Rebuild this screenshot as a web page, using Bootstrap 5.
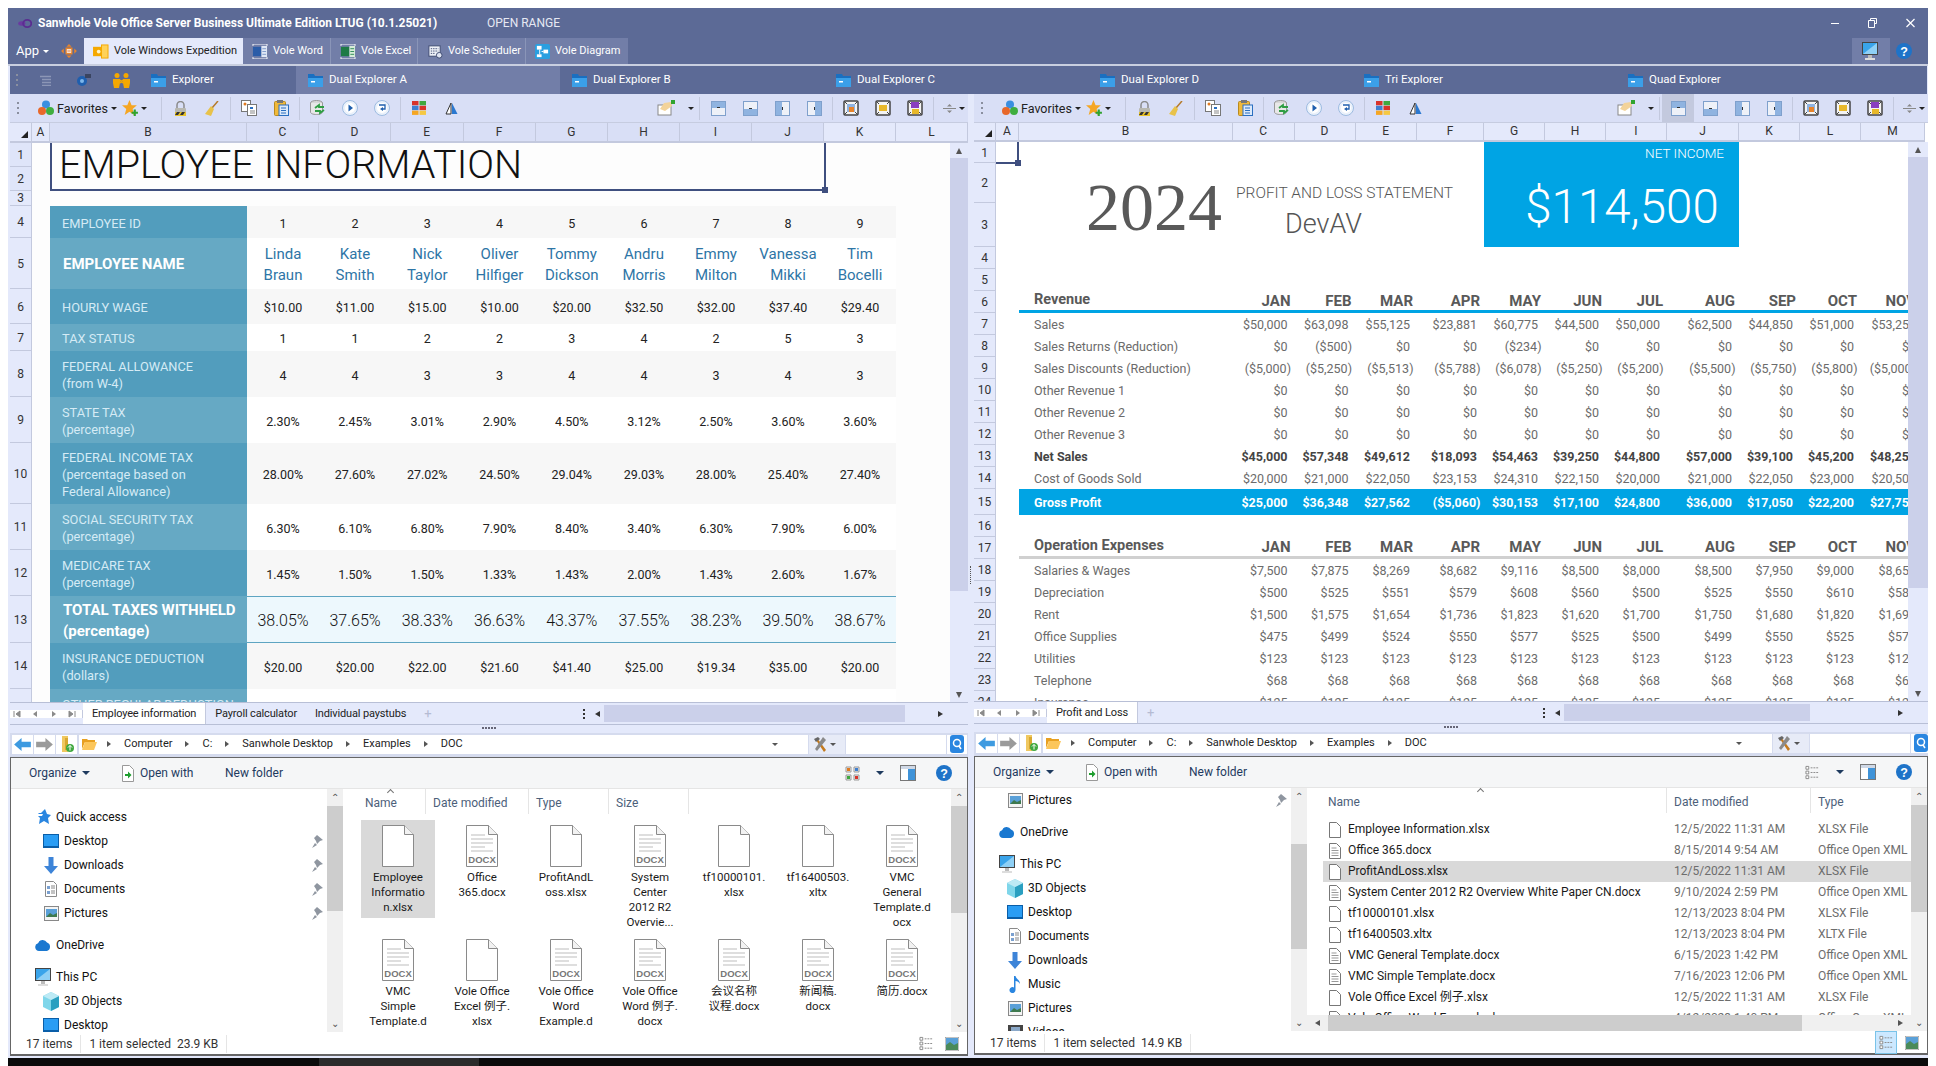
<!DOCTYPE html>
<html lang="en">
<head>
<meta charset="UTF-8">
<title>Sanwhole Vole Office Server</title>
<link href="https://cdn.jsdelivr.net/npm/bootstrap@5.3.0/dist/css/bootstrap.min.css" rel="stylesheet">
<style>
  html, body { height: 100%; overflow: hidden; background: #fff; }
  body { padding: 8px 8px 0; font: 12px/1.2 Roboto, "Noto Sans CJK SC", sans-serif; color: #222; }
  svg { display: block; flex: none; }
  #win { width: 1920px; height: 1050px; background: #e4e9fb; }
  .titlebar { height: 30px; background: #5c6a96; color: #fff; padding-left: 9px; }
  .titlebar b { font-size: 12px; font-weight: 700; margin-left: 6px; width: 422px; white-space: nowrap; }
  .titlebar .range { color: #e6e9f3; font-size: 12px; margin-left: 27px; }
  .win-btns { margin-left: auto; padding-right: 13px; gap: 29px; }
  .appbar { height: 26px; background: #5c6a96; color: #fff; }
  .appbar .app { width: 53px; padding-left: 8px; font-size: 13px; }
  .appbar .orange { width: 23px; }
  .apptab { height: 26px; background: #727ea8; color: #fff; padding-left: 9px; gap: 5px; border-right: 1px solid #8a95b8; white-space: nowrap; font-size: 11px; }
  .apptab.on { background: #e4e9fb; color: #222; border: 0; }
  .apptab.mon { width: 38px; padding-left: 10px; border: 0; margin-left: auto; }
  .help-top { width: 38px; padding-left: 6px; }
  .rule { height: 2px; background: #c9cfe0; }
  .exptabs { height: 28px; background: #5c6a96; color: #fff; margin: 0 1px 0 2px; font-size: 11.5px; }
  .exptabs .grip { width: 16px; padding-left: 6px; }
  .exptabs .tool { width: 38px; }
  .exptab { height: 28px; width: 264px; padding-left: 12px; gap: 6px; white-space: nowrap; }
  .exptab.first { width: 156px; padding-left: 11px; }
  .exptab.on { background: #727ea8; }
  .panes { height: 962px; padding-left: 2px; }
  .pane { flex: none; }
  .pane-l { width: 958px; }
  .pane-r { width: 954px; }
  .gutter { width: 6px; flex: none; }
  .gutter i { display: block; width: 1px; height: 18px; border-left: 1px dotted #555; margin-left: 2px; }
  .tbar { height: 29px; background: #d9dff6; border-bottom: 1px solid #c6cce0; padding-left: 7px; }
  .tbar .grip { width: 13px; }
  .grip i { display: block; width: 2px; height: 2px; background: #8a8f9f; margin: 3px 0; }
  .tb { width: 32px; height: 28px; display: flex; align-items: center; justify-content: center; flex: none; }
  .tb.act { background: #c3c9de; }
  .sep { width: 1px; height: 23px; background: #c3c9de; margin: 0 2px; flex: none; }
  .caret-d { width: 0; height: 0; border: 3px solid transparent; border-top: 3.5px solid #222; border-bottom: 0; flex: none; }
  .favs { margin-left: 8px; gap: 3px; width: 82px; font-size: 12.5px; }
  .star { width: 37px; gap: 2px; margin-left: 2px; }
  .hand { width: 49px; padding-left: 9px; gap: 13px; }
  .tb.div { width: 32px; gap: 3px; padding-left: 3px; }
  .sheet { position: relative; overflow: hidden; background: #fdfdfd; }
  .sheet-l { height: 579px; }
  .sheet-r { height: 578px; background: #fff; }
  table.grid { table-layout: fixed; border-collapse: separate; border-spacing: 0; }
  table.grid td, table.grid th { padding: 0; overflow: hidden; white-space: nowrap; }
  .ch { background: #e4e9fb; text-align: center; font-weight: 400; font-size: 12px; color: #333; border-right: 1px solid #c3c9de; border-bottom: 2px solid #c3c9de; }
  .ch.dk { background: #d9dff6; }
  .corner { position: relative; }
  .corner::after { content: ""; position: absolute; right: 3px; bottom: 3px; border-left: 7px solid transparent; border-bottom: 7px solid #222; }
  .rh { background: #e4e9fb; text-align: center; font-weight: 400; font-size: 12px; line-height: 1; color: #333; border-right: 1px solid #c3c9de; border-bottom: 1px solid #c3c9de; padding-top: 1px !important; }
  .rh.dk { background: #dfe5f9; }
  .title { font-size: 39.5px; line-height: 1; font-weight: 300; color: #111; padding-left: 9px !important; vertical-align: top; padding-top: 2px !important; }
  .lab { color: #d5ebf5; font-size: 12.8px; line-height: 17px; padding-left: 12px !important; padding-top: 2px !important; }
  .lab.big { color: #fff; font-weight: 700; font-size: 15px; line-height: 21px; padding-left: 13px !important; }
  .dark { background: #529dbd; }
  .lite { background: #66a9c4; }
  .num { text-align: center; font-size: 12.5px; color: #222; padding-top: 2px !important; }
  .zeb { background: #f7f7f7; }
  .wht { background: #fff; }
  .name { font-size: 15px; line-height: 21px; color: #2e75a6; }
  .tot { background: #edf8fd; font-size: 16px; font-weight: 300; color: #111; border-top: 1px solid #5ea5c2; border-bottom: 1px solid #5ea5c2; }
  .selbox { position: absolute; border: 2px solid #3f4f7f; border-top: 0; }
  .selbox b { position: absolute; width: 6px; height: 6px; background: #3f4f7f; right: -4px; bottom: -4px; }
  .year { font: 68px/1 "Liberation Serif", serif; color: #595959; text-align: right; padding-right: 11px !important; padding-top: 4px !important; }
  .pl { font-size: 15.5px; font-weight: 300; line-height: 20px; color: #555; padding-left: 3px !important; vertical-align: bottom; }
  .dev { font-size: 27px; font-weight: 300; color: #555; padding-left: 52px !important; }
  .netcell { background: #00a4e4; color: #fff; vertical-align: top; }
  .netcell .t1 { height: 22px; line-height: 22px; text-align: right; padding-right: 15px; font-size: 13.5px; font-weight: 300; }
  .netcell .t2 { margin-top: 13px; line-height: 60px; font-size: 47.5px; font-weight: 300; text-align: center; padding-left: 21px; }
  .pl-lab { padding-left: 15px !important; font-size: 12.5px; color: #6b6b6b; padding-top: 1px !important; }
  .pl-num { text-align: right; padding-right: 7px !important; font-size: 12.5px; color: #6b6b6b; padding-top: 1px !important; }
  .pl-num.neg { padding-right: 3.5px !important; }
  .hd { font-size: 15px; font-weight: 700; color: #595959; padding-right: 4px !important; padding-left: 0; }
  .hd-l { font-size: 14.5px; font-weight: 700; color: #595959; padding-left: 15px !important; }
  table.grid tr td.pl-num:last-child { padding-right: 9px !important; }
  .rev { border-bottom: 3px solid #00a4e4; }
  .ops { border-bottom: 3px solid #d0d0d0; }
  .bold { font-weight: 700; color: #444; }
  .gross { background: #00a4e4; color: #fff !important; font-weight: 700; }
  .vs { position: absolute; right: 0; bottom: 0; background: #e4e9fb; }
  .vs .thumb { background: #cbd0ea; }
  .vs .btn-up, .vs .btn-dn { height: 15px; }
  .tri-u { width: 0; height: 0; border: 3.5px solid transparent; border-bottom: 6px solid #555; border-top: 0; }
  .tri-d { width: 0; height: 0; border: 3.5px solid transparent; border-top: 6px solid #555; border-bottom: 0; }
  .tri-l { width: 0; height: 0; border: 3.5px solid transparent; border-right: 5px solid #333; border-left: 0; }
  .tri-r { width: 0; height: 0; border: 3.5px solid transparent; border-left: 5px solid #333; border-right: 0; }
  .tri-r.sm { border-width: 3px; border-left: 4px solid #555; border-right: 0; }
  .shtabs { height: 23px; background: #e4e9fb; border-top: 1px solid #b8bfd6; border-bottom: 1px solid #b8bfd6; white-space: nowrap; font-size: 11px; letter-spacing: -.15px; }
  .shnav { width: 73px; background: #fff; padding: 0 6px 0 3px; justify-content: space-between; border-right: 1px solid #c3c9de; flex: none; }
  .shtab { padding: 0 9px; }
  .shtab.on { background: #fff; border-right: 1px solid #c3c9de; }
  .shtab.plus { color: #b5bbd3; font-size: 13px; }
  .hs-thumb { height: 17px; background: #cbd0ea; }
  .dots3 { width: 2px; margin: 0 10px 0 auto; }
  .dots3 i { display: block; width: 2px; height: 2px; background: #333; margin: 2px 0; }
  .split { height: 8px; justify-content: center; padding-top: 2px; }
  .split i { display: block; width: 2px; height: 2px; background: #667; margin: 0 .5px; }
  .addr { height: 24px; background: #d5dbee; padding: 1px 2px 3px; gap: 1px; }
  .nav-b { width: 21px; height: 19px; background: #fff; display: flex; align-items: center; justify-content: center; flex: none; }
  .crumb { width: 707px; height: 19px; background: #fff; padding-left: 3px; flex: none; white-space: nowrap; margin-left: 1px; font-size: 11px; }
  .crumb .seg { margin: 0 13px; }
  .addr .gap { width: 22px; height: 19px; background: #fff; flex: none; margin-left: -1px; }
  .addr .toolb { width: 36px; height: 19px; background: #e7ebf7; flex: none; gap: 3px; padding-left: 5px; }
  .addr .sbox { width: 100px; height: 19px; background: #fff; flex: none; }
  .expl { height: 299px; border: 1px solid #666; border-bottom-width: 2px; background: #fff; margin-right: 0; }
  .ebar { height: 31px; background: #f5f6f7; border-bottom: 1px solid #e5e5e5; color: #1e3a5f; flex: none; }
  .ebar .org { margin-left: 18px; gap: 6px; width: 93px; }
  .ebar .open { width: 103px; gap: 6px; }
  .ebar .right { margin-left: auto; padding-right: 15px; }
  .emain { height: 243px; overflow: hidden; flex: none; }
  .enav { width: 316px; overflow: hidden; flex: none; }
  .nv { height: 24px; padding-left: 32px; gap: 5px; color: #111; white-space: nowrap; }
  .nv.top { padding-left: 24px; }
  .nv.gapb { margin-top: 8px; }
  .nv .ib { width: 16px; display: flex; justify-content: center; flex: none; }
  .nv .pin { margin-left: auto; margin-right: 3px; }
  .enav.sl { padding-top: 16px; }
  .vsb { width: 16px; background: #f0f0f0; flex: none; }
  .vsb .a { height: 17px; color: #555; font-size: 10px; line-height: 17px; text-align: center; }
  .vsb .th { background: #cdcdcd; }
  .efiles { flex: 1; min-width: 0; overflow: hidden; position: relative; }
  .colh { height: 25px; color: #4c607a; position: relative; }
  .colh > div { height: 25px; padding: 7px 0 0 7px; border-right: 1px solid #e5e5e5; flex: none; white-space: nowrap; }
  .sort { position: absolute; top: 1px; border: solid #777; border-width: 1px 0 0 1px; width: 5px; height: 5px; transform: rotate(45deg); }
  .fgrid { display: grid; grid-template-columns: repeat(7, 74px); column-gap: 10px; grid-auto-rows: 114px; margin: 6px 0 0 18px; }
  .fcell { height: fit-content; padding: 5px 0 3px; text-align: center; line-height: 15px; color: #1a1a1a; white-space: nowrap; font-size: 11.5px; }
  .fcell svg { margin: 0 auto 3px; }
  .fcell.on { background: #d9d9d9; }
  .flist { margin-top: 6px; }
  .fr { height: 21px; white-space: nowrap; }
  .fr.on { background: #d9d9d9; margin-right: 0; }
  .fr .n { width: 351px; padding-left: 6px; gap: 7px; color: #1a1a1a; flex: none; }
  .fr .d { width: 144px; color: #6d6d6d; flex: none; }
  .fr .y { color: #6d6d6d; }
  .hsb { position: absolute; left: 0; right: 0; bottom: 0; height: 16px; background: #f0f0f0; }
  .hsb .th { height: 16px; background: #cdcdcd; }
  .estat { height: 23px; border-top: 0; padding-left: 15px; color: #333; flex: none; white-space: nowrap; }
  .estat .s { border-right: 1px solid #e5e5e5; height: 18px; line-height: 18px; }
  .estat .v { margin-left: auto; gap: 8px; padding-right: 8px; }
  .vw { width: 22px; height: 23px; display: flex; align-items: center; justify-content: center; }
  .vw.on { background: #cce8ff; border: 1px solid #7ac3e8; }
  .taskbar { height: 8px; background: #0b0b0b; width: 1920px; }
  .taskbar .blk { width: 160px; height: 8px; background: #2b2b2b; margin-left: 311px; }
</style>
</head>
<body>
<svg width="0" height="0" style="position:absolute">
  <symbol id="logo" viewBox="0 0 16 10"><ellipse cx="5" cy="5" rx="4" ry="2.5" fill="#6a3aa0"/><ellipse cx="11" cy="5" rx="4.5" ry="4" fill="none" stroke="#5a2d91" stroke-width="2"/></symbol>
  <symbol id="fold" viewBox="0 0 15 15"><path d="M0 1h6l1 2h8v11H0z" fill="#1a6fc0"/><path d="M0 5h15v9H0z" fill="#3b9fe8"/><rect x="3" y="8" width="4" height="1.5" fill="#fff"/></symbol>
  <symbol id="orange" viewBox="0 0 18 16"><path d="M9 0l3 3H6zM9 16l-3-3h6zM0 8l3-3v6zM18 8l-3 3V5z" fill="#e8842a"/><rect x="5" y="4" width="8" height="8" fill="#e8842a"/><rect x="6.5" y="6" width="5" height="4" fill="#fff"/><rect x="7" y="7.5" width="4" height="1" fill="#d45a10"/></symbol>
  <symbol id="t-exp" viewBox="0 0 17 16"><rect x="0" y="3" width="11" height="10" fill="#f5a800"/><rect x="9" y="1" width="7" height="14" fill="#ffd25a" stroke="#f5a800"/><circle cx="6" cy="8" r="2" fill="#fff4c8"/></symbol>
  <symbol id="t-word" viewBox="0 0 17 16"><path d="M1 0h15M1 16h15M1 0v2M16 0v2M1 14v2M16 14v2" stroke="#fff"/><rect x="1" y="3" width="9" height="10" fill="#2b5ca8"/><rect x="10" y="2" width="6" height="12" fill="#dfe7f5"/><path d="M11 5h4M11 8h4M11 11h4" stroke="#7d98c8"/></symbol>
  <symbol id="t-xl" viewBox="0 0 17 16"><path d="M1 0h15M1 16h15M1 0v2M16 0v2M1 14v2M16 14v2" stroke="#fff"/><rect x="1" y="3" width="9" height="10" fill="#1e7a45"/><rect x="10" y="2" width="6" height="12" fill="#d6ecd8"/><path d="M11 5h4M11 8h4M11 11h4" stroke="#2e8b57"/></symbol>
  <symbol id="t-sch" viewBox="0 0 17 16"><rect x="2" y="2" width="12" height="11" fill="#eef1f8" stroke="#3d4a70"/><path d="M4 5h8M4 7.5h8M4 10h5" stroke="#3d4a70" stroke-dasharray="1.5 1"/><circle cx="13" cy="12" r="3" fill="#dfe4f2" stroke="#3d4a70"/></symbol>
  <symbol id="t-dia" viewBox="0 0 16 16"><rect width="16" height="16" rx="2" fill="#2a9fe0"/><rect x="2" y="2" width="5" height="4" fill="#fff"/><rect x="9" y="6" width="5" height="4" fill="#fff"/><rect x="2" y="11" width="5" height="3" fill="#fff"/><path d="M5 6v5M7 8h2" stroke="#fff"/></symbol>
  <symbol id="mon" viewBox="0 0 16 18"><rect x="0" y="0" width="16" height="13" fill="#444"/><rect x="1" y="1" width="14" height="11" fill="#3aa4ea"/><path d="M1 12L15 1v11z" fill="#8fd0f5"/><rect x="6" y="13" width="4" height="3" fill="#bbb"/><rect x="3" y="16" width="10" height="2" fill="#ddd"/></symbol>
  <symbol id="help" viewBox="0 0 16 16"><circle cx="8" cy="8" r="8" fill="#1e73c8"/><text x="8" y="12.5" font-size="12.5" font-weight="700" fill="#fff" text-anchor="middle" font-family="Liberation Sans">?</text></symbol>
  <symbol id="lst" viewBox="0 0 13 11"><path d="M1 1.5h11M3 4.5h9M3 7.5h9M3 10.5h9" stroke="#8c96b6" stroke-width="1.5"/></symbol>
  <symbol id="gear" viewBox="0 0 16 14"><circle cx="7" cy="8" r="5" fill="#1f5fae"/><circle cx="7" cy="8" r="2" fill="#7db6ea"/><rect x="10" y="1" width="6" height="4" fill="#3a4460"/></symbol>
  <symbol id="ppl" viewBox="0 0 17 15"><circle cx="4" cy="2.5" r="2.5" fill="#f5a800"/><circle cx="13" cy="2.5" r="2.5" fill="#f5a800"/><path d="M0 6h7v4l-1 5H1L0 10zM10 6h7v4l-1 5h-5l-1-5z" fill="#f5a800"/><path d="M7 7l3 3M10 7l-3 3" stroke="#f5a800" stroke-width="1.5"/></symbol>
  <symbol id="cube" viewBox="0 0 16 16"><circle cx="8" cy="4.5" r="4" fill="#3a8fe0"/><circle cx="4" cy="11" r="4" fill="#e8682a"/><circle cx="12" cy="11" r="4" fill="#3fae3f"/></symbol>
  <symbol id="star" viewBox="0 0 16 16"><path d="M7 0l2 5h5l-4 3.5 1.5 5.5L7 11l-4.500 3L4 8.500 0 5h5z" fill="#f5a623"/><path d="M12 9v6M9 12h6" stroke="#2fa32f" stroke-width="2"/></symbol>
  <symbol id="lock" viewBox="0 0 13 15"><path d="M3 7V4a3.500 3.500 0 0 1 7 0v3" fill="none" stroke="#8a8a8a" stroke-width="1.5"/><rect x="1" y="7" width="11" height="8" rx="1" fill="#b8b8b0"/><rect x="1" y="11" width="11" height="4" fill="#e8c22a"/><path d="M1 14l2-3h3l-2 3zM6 14l2-3h3l-2 3z" fill="#333"/></symbol>
  <symbol id="broom" viewBox="0 0 14 15"><path d="M13 0L7 7" stroke="#b57a2a" stroke-width="1.500"/><path d="M6 5l3 3-3 7-6-2z" fill="#e8c24a"/></symbol>
  <symbol id="copy" viewBox="0 0 16 16"><rect x="0.500" y="0.500" width="9" height="11" fill="#fff" stroke="#777"/><rect x="6.500" y="4.500" width="9" height="11" fill="#fff" stroke="#777"/><circle cx="4" cy="4" r="1.500" fill="#e07a20"/><rect x="9" y="7" width="3" height="2" fill="#2a6fc0"/><path d="M9 11h5M9 13h5" stroke="#888"/></symbol>
  <symbol id="paste" viewBox="0 0 15 16"><rect x="0.500" y="1.500" width="11" height="14" rx="1" fill="#f0b93a" stroke="#b98a1e"/><rect x="3" y="0" width="6" height="3" fill="#777"/><rect x="5" y="5" width="9.500" height="10.500" fill="#dbe9fa" stroke="#2a6fc0"/><path d="M7 8h5M7 10.500h5M7 13h5" stroke="#2a6fc0"/></symbol>
  <symbol id="reload" viewBox="0 0 16 16"><ellipse cx="6.500" cy="3" rx="6" ry="2.500" fill="#d8d8d8" stroke="#999"/><path d="M0.500 3v9c0 1.500 2.500 2.500 6 2.500s6-1 6-2.500V3" fill="#e8e8e8" stroke="#999"/><path d="M5 8l4-3v2h5M14 10l-4 3v-2H5" fill="none" stroke="#2f9e44" stroke-width="1.800"/></symbol>
  <symbol id="cplay" viewBox="0 0 16 16"><circle cx="8" cy="8" r="7.500" fill="#eaf1fb" stroke="#9dbbe0"/><circle cx="8" cy="8" r="5" fill="#fff"/><path d="M6.500 4.500L11 8l-4.500 3.500z" fill="#1f5fae"/></symbol>
  <symbol id="cret" viewBox="0 0 16 16"><circle cx="8" cy="8" r="7.500" fill="#eaf1fb" stroke="#9dbbe0"/><circle cx="8" cy="8" r="5" fill="#fff"/><path d="M5 5h6v4H8" fill="none" stroke="#1f5fae" stroke-width="1.300"/><path d="M9 7l-3 2 3 2z" fill="#1f5fae"/></symbol>
  <symbol id="wins" viewBox="0 0 14 14"><rect width="6.500" height="4.300" fill="#d9332a"/><rect x="7.500" width="6.500" height="4.300" fill="#3fa83f"/><rect y="4.800" width="6.500" height="4.300" fill="#3f7fd0"/><rect x="7.500" y="4.800" width="6.500" height="4.300" fill="#d9332a"/><rect y="9.600" width="6.500" height="4.300" fill="#f5a623"/><rect x="7.500" y="9.600" width="6.500" height="4.300" fill="#f5c842"/></symbol>
  <symbol id="tria" viewBox="0 0 13 13"><path d="M6 1v11H1z" fill="#fff" stroke="#333"/><path d="M7 1v11h5.500z" fill="#2a78d0"/></symbol>
  <symbol id="handc" viewBox="0 0 18 16"><rect x="1" y="5" width="13" height="10" fill="#fff" stroke="#888"/><path d="M3 9l4-6 7-1 1 4-7 5z" fill="#f3d39a"/><rect x="14" y="0" width="4" height="4" fill="#2fa32f"/></symbol>
  <symbol id="sp1" viewBox="0 0 15 15"><rect x="0.500" y="0.500" width="14" height="14" fill="#eef1f8" stroke="#7fa0cc"/><rect x="1" y="1" width="13" height="6" fill="#8fb3e0"/><rect x="6" y="6" width="3" height="1" fill="#333"/></symbol>
  <symbol id="sp2" viewBox="0 0 15 15"><rect x="0.500" y="0.500" width="14" height="14" fill="#eef1f8" stroke="#7fa0cc"/><rect x="1" y="8" width="13" height="6" fill="#8fb3e0"/><rect x="6" y="7" width="3" height="1" fill="#333"/></symbol>
  <symbol id="sp3" viewBox="0 0 15 15"><rect x="0.500" y="0.500" width="14" height="14" fill="#eef1f8" stroke="#7fa0cc"/><rect x="1" y="1" width="6" height="13" fill="#8fb3e0"/><rect x="7" y="6" width="1" height="3" fill="#333"/></symbol>
  <symbol id="sp4" viewBox="0 0 15 15"><rect x="0.500" y="0.500" width="14" height="14" fill="#eef1f8" stroke="#7fa0cc"/><rect x="8" y="1" width="6" height="13" fill="#8fb3e0"/><rect x="7" y="6" width="1" height="3" fill="#333"/></symbol>
  <symbol id="fr1" viewBox="0 0 16 16"><rect x="1" y="1" width="14" height="14" rx="1" fill="#f4f4f4" stroke="#444" stroke-width="1.500"/><path d="M1 1l3 3M15 1l-3 3M1 15l3-3M15 15l-3-3" stroke="#444"/><rect x="4" y="4" width="8" height="8" fill="#8fb3e0"/><rect x="6" y="7" width="5" height="5" fill="#e8842a"/></symbol>
  <symbol id="fr2" viewBox="0 0 16 16"><rect x="1" y="1" width="14" height="14" rx="1" fill="#f4f4f4" stroke="#444" stroke-width="1.500"/><path d="M1 1l3 3M15 1l-3 3M1 15l3-3M15 15l-3-3" stroke="#444"/><rect x="4" y="5" width="8" height="6" fill="#e8b82a"/></symbol>
  <symbol id="fr3" viewBox="0 0 16 16"><rect x="1" y="1" width="14" height="14" rx="1" fill="#f4f4f4" stroke="#444" stroke-width="1.500"/><path d="M1 1l3 3M15 1l-3 3M1 15l3-3M15 15l-3-3" stroke="#444"/><rect x="4" y="2" width="8" height="6" fill="#8a3fc0"/><rect x="5" y="9" width="7" height="5" fill="#e8b82a"/></symbol>
  <symbol id="dvd" viewBox="0 0 13 11"><path d="M0 5.500h13" stroke="#888"/><path d="M4 3.500h5L6.500 1zM4 7.500h5L6.500 10z" fill="#888"/></symbol>
  <symbol id="back" viewBox="0 0 18 14"><path d="M8 0v4h10v6H8v4L0 7z" fill="#3d9ae0"/></symbol>
  <symbol id="fwd" viewBox="0 0 18 14"><path d="M10 0v4H0v6h10v4l8-7z" fill="#9a9a9a"/></symbol>
  <symbol id="up" viewBox="0 0 14 18"><path d="M2 1h6v16H2z" fill="#f0c860"/><path d="M5 3h3v12H5z" fill="#d8a830"/><circle cx="10" cy="13" r="4" fill="#3fa83f"/><path d="M10 10.500v5M8 12.500l2-2 2 2" stroke="#fff" fill="none"/></symbol>
  <symbol id="ofold" viewBox="0 0 15 12"><path d="M0 1h5l1 1h7v2H3L0 11z" fill="#e8a020"/><path d="M3 4h12l-3 8H0z" fill="#fcc65a"/></symbol>
  <symbol id="hamm" viewBox="0 0 13 15"><path d="M3 1l9 12-2 2L2 3z" fill="#c47a1e"/><path d="M0 2l4-2 2 2-4 3z" fill="#666"/><path d="M9 0l3 3-9 11-2-2z" fill="#8a8a8a"/></symbol>
  <symbol id="srch" viewBox="0 0 14 18"><rect width="14" height="18" rx="3" fill="#2a86e0"/><circle cx="7" cy="8" r="3.500" fill="none" stroke="#fff" stroke-width="1.500"/><path d="M9 11l2 3" stroke="#fff" stroke-width="1.500"/></symbol>
  <symbol id="openw" viewBox="0 0 12 17"><path d="M0.500 0.500h7l4 4v12h-11z" fill="#fff" stroke="#999"/><path d="M3 9h3V6.500L9.500 10 6 13.500V11H3z" fill="#1e9e2e"/></symbol>
  <symbol id="viewl" viewBox="0 0 15 15"><path d="M1 1h5v5H1zM9 1h5v5H9zM1 9h5v5H1zM9 9h5v5H9z" fill="#eee" stroke="#999"/><path d="M2 2h3v3H2z" fill="#e07a20"/><path d="M10 2h3v3h-3z" fill="#3f7fd0"/><path d="M2 10h3v3H2z" fill="#3fa83f"/><path d="M10 10h3v3h-3z" fill="#d9332a"/></symbol>
  <symbol id="viewd" viewBox="0 0 16 15"><path d="M1 1h3v3H1zM1 6h3v3H1zM1 11h3v3H1z" fill="#fff" stroke="#888"/><path d="M6 2.500h9M6 7.500h9M6 12.500h9" stroke="#888" stroke-dasharray="2 1"/></symbol>
  <symbol id="pane" viewBox="0 0 16 16"><rect x="0.500" y="0.500" width="15" height="15" fill="#fff" stroke="#777"/><rect x="8" y="1" width="7" height="14" fill="#3f93d8"/><rect x="1" y="1" width="14" height="3" fill="#cfd8e6"/></symbol>
  <symbol id="stree" viewBox="0 0 14 14"><path d="M0 0h14v14H0z" fill="#fff" stroke="#888"/><path d="M1 1h12v7H1z" fill="#5aa0d8"/><path d="M1 8l4-3 4 3 4-2v7H1z" fill="#4a8a5a"/></symbol>
  <symbol id="qa" viewBox="0 0 15 16"><path d="M9 0l2 5 4 1-3 3 1 6-5-3-5 3 1-6-2-2h4l1-2H2l1-1h2z" fill="#2a86e0"/></symbol>
  <symbol id="desk" viewBox="0 0 16 14"><rect width="16" height="14" fill="#0a5ea8"/><rect x="1" y="1" width="14" height="11" fill="#2a9df4"/></symbol>
  <symbol id="down" viewBox="0 0 16 17"><path d="M5.500 0h5v9H15l-7 8-7-8h4.500z" fill="#3d84d8"/></symbol>
  <symbol id="docs" viewBox="0 0 12 16"><path d="M0.500 0.500h8l3 3v12h-11z" fill="#fff" stroke="#8a8a8a"/><path d="M2 5h3v3H2zM2 10h3v3H2z" fill="#7aa0d0"/><path d="M6 5h4M6 7h4M6 10h4M6 12h4" stroke="#888"/></symbol>
  <symbol id="pics" viewBox="0 0 15 15"><rect x="0.500" y="0.500" width="14" height="14" fill="#f4f4f4" stroke="#888"/><rect x="2" y="3" width="11" height="8" fill="#5aa0d8"/><path d="M2 11l4-4 3 2 4-2v4z" fill="#3f7a4f"/></symbol>
  <symbol id="odrv" viewBox="0 0 16 14"><path d="M4 13a4 4 0 0 1-1-7.800A5 5 0 0 1 12 4.500 4.500 4.500 0 0 1 12 13z" fill="#1a78d0"/><circle cx="6" cy="4" r="1.500" fill="#1a78d0"/></symbol>
  <symbol id="obj3" viewBox="0 0 16 19"><path d="M8 0l8 4v11l-8 4-8-4V4z" fill="#7fd6ea"/><path d="M8 8v11l8-4V4z" fill="#2a9fc0"/><path d="M0 4l8 4 8-4-8-4z" fill="#bdeaf5"/></symbol>
  <symbol id="music" viewBox="0 0 12 17"><path d="M5 0h1.500c.5 3 4.500 4 4.500 8-1-2-3-3-4.500-3v9a3 3 0 1 1-1.500-2.500z" fill="#2a86e0"/></symbol>
  <symbol id="vids" viewBox="0 0 15 15"><rect width="15" height="15" fill="#444"/><rect x="3" y="2" width="9" height="11" fill="#8aa8c8"/></symbol>
  <symbol id="pin" viewBox="0 0 12 14"><path d="M5 1l6 5-3 1-3 3-1-3-2-3z" fill="#8f96a0"/><path d="M3 9l-3 5 5-3" fill="#8f96a0"/></symbol>
  <symbol id="blank" viewBox="0 0 32 42"><path d="M0.500 0.500h22l9 9v32h-31z" fill="#fff" stroke="#8a8a8a"/><path d="M22.500 0.500v9h9" fill="#f2f2f2" stroke="#8a8a8a"/></symbol>
  <symbol id="docx" viewBox="0 0 32 42"><path d="M0.500 0.500h22l9 9v32h-31z" fill="#fff" stroke="#8a8a8a"/><path d="M22.500 0.500v9h9" fill="#f2f2f2" stroke="#8a8a8a"/><path d="M5 10h14M5 14h22M5 18h22M5 22h14M5 26h22" stroke="#bdbdbd"/><text x="16" y="38" font-size="9.500" font-weight="700" fill="#777" text-anchor="middle" font-family="Liberation Sans">DOCX</text></symbol>
  <symbol id="sblank" viewBox="0 0 12 16"><path d="M0.500 0.500h7l4 4v11h-11z" fill="#fff" stroke="#777"/></symbol>
  <symbol id="sdoc" viewBox="0 0 12 16"><path d="M0.500 0.500h7l4 4v11h-11z" fill="#fff" stroke="#777"/><path d="M2.500 5h5M2.500 7.500h7M2.500 10h7M2.500 12.500h7" stroke="#999"/></symbol>
  <symbol id="n-first" viewBox="0 0 8 8"><path d="M1 1v6M7 1v6L3 4zM4.500 2.500" stroke="#8a8a8a" fill="#8a8a8a"/></symbol>
  <symbol id="n-prev" viewBox="0 0 8 8"><path d="M6 1v6L2 4z" fill="#8a8a8a"/></symbol>
  <symbol id="n-next" viewBox="0 0 8 8"><path d="M2 1v6l4-3z" fill="#8a8a8a"/></symbol>
  <symbol id="n-last" viewBox="0 0 8 8"><path d="M7 1v6M1 1v6l4-3z" stroke="#8a8a8a" fill="#8a8a8a"/></symbol>
</svg>

<div id="win">
  <div class="titlebar d-flex align-items-center">
    <svg width="15" height="9"><use href="#logo"/></svg>
    <b>Sanwhole Vole Office Server Business Ultimate Edition LTUG (10.1.25021)</b>
    <span class="range">OPEN RANGE</span>
    <div class="win-btns d-flex align-items-center">
      <svg width="8" height="10"><path d="M0 5.500h8" stroke="#fff"/></svg>
      <svg width="9" height="10"><path d="M2.500 2.500V.5h6v5h-2M.5 2.500h6v7h-6z" fill="none" stroke="#fff"/></svg>
      <svg width="9" height="10"><path d="M.5 1l8 8M8.500 1l-8 8" stroke="#fff" stroke-width="1.200"/></svg>
    </div>
  </div>
  <div class="appbar d-flex align-items-center">
    <div class="app d-flex align-items-center gap-1">App <span class="caret-d" style="border-top-color:#fff"></span></div>
    <div class="orange"><svg width="16" height="14"><use href="#orange"/></svg></div>
    <div class="apptab on d-flex align-items-center" style="width:159px"><svg width="16" height="15"><use href="#t-exp"/></svg>Vole Windows Expedition</div>
    <div class="apptab d-flex align-items-center" style="width:88px"><svg width="16" height="15"><use href="#t-word"/></svg>Vole Word</div>
    <div class="apptab d-flex align-items-center" style="width:87px"><svg width="16" height="15"><use href="#t-xl"/></svg>Vole Excel</div>
    <div class="apptab d-flex align-items-center" style="width:108px"><svg width="16" height="15"><use href="#t-sch"/></svg>Vole Scheduler</div>
    <div class="apptab d-flex align-items-center" style="width:102px;border:0"><svg width="15" height="15"><use href="#t-dia"/></svg>Vole Diagram</div>
    <div class="apptab mon d-flex align-items-center"><svg width="16" height="18"><use href="#mon"/></svg></div>
    <div class="help-top"><svg width="16" height="16"><use href="#help"/></svg></div>
  </div>
  <div class="rule"></div>
  <div class="exptabs d-flex align-items-center">
    <div class="grip"><i></i><i></i><i></i></div>
    <div class="tool d-flex justify-content-center"><svg width="13" height="11"><use href="#lst"/></svg></div>
    <div class="tool d-flex justify-content-center"><svg width="16" height="14"><use href="#gear"/></svg></div>
    <div class="tool d-flex justify-content-center"><svg width="17" height="15"><use href="#ppl"/></svg></div>
    <div class="exptab first d-flex align-items-center"><svg width="15" height="15"><use href="#fold"/></svg>Explorer</div>
    <div class="exptab on d-flex align-items-center"><svg width="15" height="15"><use href="#fold"/></svg>Dual Explorer A</div>
    <div class="exptab d-flex align-items-center"><svg width="15" height="15"><use href="#fold"/></svg>Dual Explorer B</div>
    <div class="exptab d-flex align-items-center"><svg width="15" height="15"><use href="#fold"/></svg>Dual Explorer C</div>
    <div class="exptab d-flex align-items-center"><svg width="15" height="15"><use href="#fold"/></svg>Dual Explorer D</div>
    <div class="exptab d-flex align-items-center"><svg width="15" height="15"><use href="#fold"/></svg>Tri Explorer</div>
    <div class="exptab d-flex align-items-center"><svg width="15" height="15"><use href="#fold"/></svg>Quad Explorer</div>
  </div>
  <div class="panes d-flex">
    <div class="pane pane-l d-flex flex-column" id="paneL"></div>
    <div class="gutter d-flex align-items-center"><i></i></div>
    <div class="pane pane-r d-flex flex-column" id="paneR"></div>
  </div>
</div>
<div class="taskbar d-flex"><div class="blk"></div></div>

<script>
  const ic = (id, w, h) => `<svg width="${w}" height="${h}"><use href="#${id}"/></svg>`;
  const grip = `<div class="grip"><i></i><i></i><i></i></div>`;

  function toolbar(activeSplit) {
    return `<div class="tbar d-flex align-items-center flex-none">
      ${grip}
      <div class="favs d-flex align-items-center">${ic("cube",16,16)}<span>Favorites</span><span class="caret-d"></span></div>
      <div class="star d-flex align-items-center">${ic("star",17,17)}<span class="caret-d"></span></div>
      <div class="sep"></div>
      <div class="tb">${ic("lock",13,15)}</div><div class="tb">${ic("broom",14,15)}</div><div class="sep"></div>
      <div class="tb">${ic("copy",16,16)}</div><div class="tb">${ic("paste",15,16)}</div><div class="sep"></div>
      <div class="tb">${ic("reload",16,16)}</div><div class="tb">${ic("cplay",16,16)}</div><div class="tb">${ic("cret",16,16)}</div><div class="sep"></div>
      <div class="tb">${ic("wins",14,14)}</div><div class="tb">${ic("tria",13,13)}</div>
      <div class="ms-auto d-flex align-items-center">
        <div class="hand d-flex align-items-center">${ic("handc",18,16)}<span class="caret-d"></span></div>
        <div class="sep"></div>
        <div class="tb ${activeSplit ? "act" : ""}">${ic("sp1",15,15)}</div><div class="tb">${ic("sp2",15,15)}</div><div class="tb">${ic("sp3",15,15)}</div><div class="tb">${ic("sp4",15,15)}</div>
        <div class="sep"></div>
        <div class="tb">${ic("fr1",16,16)}</div><div class="tb">${ic("fr2",16,16)}</div><div class="tb">${ic("fr3",16,16)}</div>
        <div class="sep"></div>
        <div class="tb div">${ic("dvd",13,11)}<span class="caret-d"></span></div>
      </div></div>`;
  }

  const colgroup = w => `<colgroup>${w.map(x => `<col style="width:${x}px">`).join("")}</colgroup>`;
  const sum = a => a.reduce((x, y) => x + y, 0);

  function vscroll(w, thumb) {
    return `<div class="vs d-flex flex-column" style="width:${w}px;top:${w === 18 ? 20 : 19}px">
      <div class="btn-up d-flex justify-content-center align-items-center"><span class="tri-u"></span></div>
      <div class="thumb" style="height:${thumb}px"></div>
      <div class="flex-grow-1"></div>
      <div class="btn-dn d-flex justify-content-center align-items-center"><span class="tri-d"></span></div></div>`;
  }

  // left sheet: employee information
  const empRows = [
    ["dark","zeb","EMPLOYEE ID",[1,2,3,4,5,6,7,8,9]],
    ["lite big","wht","EMPLOYEE NAME",["Linda<br>Braun","Kate<br>Smith","Nick<br>Taylor","Oliver<br>Hilfiger","Tommy<br>Dickson","Andru<br>Morris","Emmy<br>Milton","Vanessa<br>Mikki","Tim<br>Bocelli"],"name"],
    ["dark","zeb","HOURLY WAGE",["$10.00","$11.00","$15.00","$10.00","$20.00","$32.50","$32.00","$37.40","$29.40"]],
    ["lite","wht","TAX STATUS",[1,1,2,2,3,4,2,5,3]],
    ["dark","zeb","FEDERAL ALLOWANCE<br>(from W-4)",[4,4,3,3,4,4,3,4,3]],
    ["lite","wht","STATE TAX<br>(percentage)",["2.30%","2.45%","3.01%","2.90%","4.50%","3.12%","2.50%","3.60%","3.60%"]],
    ["dark","zeb","FEDERAL INCOME TAX<br>(percentage based on<br>Federal Allowance)",["28.00%","27.60%","27.02%","24.50%","29.04%","29.03%","28.00%","25.40%","27.40%"]],
    ["lite","wht","SOCIAL SECURITY TAX<br>(percentage)",["6.30%","6.10%","6.80%","7.90%","8.40%","3.40%","6.30%","7.90%","6.00%"]],
    ["dark","zeb","MEDICARE TAX<br>(percentage)",["1.45%","1.50%","1.50%","1.33%","1.43%","2.00%","1.43%","2.60%","1.67%"]],
    ["lite big","tot","TOTAL TAXES WITHHELD<br>(percentage)",["38.05%","37.65%","38.33%","36.63%","43.37%","37.55%","38.23%","39.50%","38.67%"],"tot"],
    ["dark","zeb","INSURANCE DEDUCTION<br>(dollars)",["$20.00","$20.00","$22.00","$21.60","$41.40","$25.00","$19.34","$35.00","$20.00"]],
    ["lite","wht","OTHER REGULAR DEDUCTION<br>(dollars)",["","","","","","","","",""]]
  ];
  const lh = [32,51,35,27,46,46,61,46,46,47,46,46];
  const lw = [22,18,197,72,72,72.5,72,72.5,72,72,72,72,72];
  const letters = "ABCDEFGHIJKLM".split("");

  let L = `<table class="grid" style="width:${sum(lw)}px">${colgroup(lw)}<tr style="height:20px"><th class="ch corner"></th>`;
  letters.slice(0, 12).forEach((c, i) => { L += `<th class="ch ${i > 0 && i < 10 ? "dk" : ""}">${c}</th>`; });
  L += `</tr>
    <tr style="height:23.5px"><th class="rh dk">1</th><td></td><td colspan="11" rowspan="2" class="title">EMPLOYEE INFORMATION</td></tr>
    <tr style="height:24px"><th class="rh dk">2</th><td></td></tr>
    <tr style="height:15.5px"><th class="rh">3</th><td colspan="12"></td></tr>`;
  empRows.forEach((r, i) => {
    L += `<tr style="height:${lh[i]}px"><th class="rh">${i + 4}</th><td></td><td class="lab ${r[0]}">${r[2]}</td>`;
    r[3].forEach(v => { L += `<td class="num ${r[1]} ${r[4] || ""}">${v}</td>`; });
    L += `<td></td></tr>`;
  });
  L += `</table>
    <div class="selbox" style="left:40px;top:20px;width:776px;height:48px"><b></b></div>
    ${vscroll(18, 433)}`;

  // right sheet: profit and loss
  const months = ["JAN","FEB","MAR","APR","MAY","JUN","JUL","AUG","SEP","OCT","NOV"];
  const rw = [22,23,214,61.5,61,61.5,67,61,61,61,72,61,61,64];
  const plRows = [
    {n:7,l:"Sales",v:["$50,000","$63,098","$55,125","$23,881","$60,775","$44,500","$50,000","$62,500","$44,850","$51,000","$53,250"]},
    {n:8,l:"Sales Returns (Reduction)",v:["$0","($500)","$0","$0","($234)","$0","$0","$0","$0","$0","$0"]},
    {n:9,l:"Sales Discounts (Reduction)",v:["($5,000)","($5,250)","($5,513)","($5,788)","($6,078)","($5,250)","($5,200)","($5,500)","($5,750)","($5,800)","($5,000)"]},
    {n:10,l:"Other Revenue 1",v:Array(11).fill("$0")},
    {n:11,l:"Other Revenue 2",v:Array(11).fill("$0")},
    {n:12,l:"Other Revenue 3",v:Array(11).fill("$0")},
    {n:13,l:"Net Sales",c:"bold",v:["$45,000","$57,348","$49,612","$18,093","$54,463","$39,250","$44,800","$57,000","$39,100","$45,200","$48,250"]},
    {n:14,l:"Cost of Goods Sold",v:["$20,000","$21,000","$22,050","$23,153","$24,310","$22,150","$20,000","$21,000","$22,050","$23,000","$20,500"]},
    {n:15,l:"Gross Profit",c:"gross",h:26,v:["$25,000","$36,348","$27,562","($5,060)","$30,153","$17,100","$24,800","$36,000","$17,050","$22,200","$27,750"]},
    {n:16,h:22},
    {n:17,head:"Operation Expenses",cls:"ops",h:21.5},
    {n:18,l:"Salaries &amp; Wages",v:["$7,500","$7,875","$8,269","$8,682","$9,116","$8,500","$8,000","$8,500","$7,950","$9,000","$8,650"]},
    {n:19,l:"Depreciation",v:["$500","$525","$551","$579","$608","$560","$500","$525","$550","$610","$580"]},
    {n:20,l:"Rent",v:["$1,500","$1,575","$1,654","$1,736","$1,823","$1,620","$1,700","$1,750","$1,680","$1,820","$1,690"]},
    {n:21,l:"Office Supplies",v:["$475","$499","$524","$550","$577","$525","$500","$499","$550","$525","$575"]},
    {n:22,l:"Utilities",v:Array(11).fill("$123")},
    {n:23,l:"Telephone",v:Array(11).fill("$68")},
    {n:24,l:"Insurance",v:Array(11).fill("$125")}
  ];
  const headRow = (n, title, cls, h) => `<tr style="height:${h}px"><th class="rh">${n}</th><td></td><td class="hd-l ${cls}">${title}</td>${months.map(m => `<td class="pl-num hd ${cls}">${m}</td>`).join("")}</tr>`;
  let R = `<table class="grid" style="width:${sum(rw)}px">${colgroup(rw)}<tr style="height:19px"><th class="ch corner"></th>`;
  letters.forEach(c => { R += `<th class="ch">${c}</th>`; });
  R += `</tr>
    <tr style="height:21px"><th class="rh">1</th><td colspan="6"></td><td colspan="4" rowspan="3" class="netcell"><div class="t1">NET INCOME</div><div class="t2">$114,500</div></td><td colspan="3"></td></tr>
    <tr style="height:39.5px"><th class="rh">2</th><td></td><td rowspan="2" class="year">2024</td><td colspan="4" class="pl">PROFIT AND LOSS STATEMENT</td><td colspan="3" rowspan="2"></td></tr>
    <tr style="height:44px"><th class="rh">3</th><td></td><td colspan="4" class="dev">DevAV</td></tr>
    <tr style="height:22px"><th class="rh">4</th><td colspan="13"></td></tr>
    <tr style="height:22px"><th class="rh">5</th><td colspan="13"></td></tr>`;
  R += headRow(6, "Revenue", "rev", 21.5);
  plRows.forEach(r => {
    const h = r.h || 22;
    if (r.head) { R += headRow(r.n, r.head, r.cls, h); return; }
    if (!r.v) { R += `<tr style="height:${h}px"><th class="rh">${r.n}</th><td colspan="13"></td></tr>`; return; }
    const c = r.c || "";
    R += `<tr style="height:${h}px"><th class="rh">${r.n}</th><td></td><td class="pl-lab ${c}">${r.l}</td>`;
    r.v.forEach(v => { R += `<td class="pl-num ${c} ${v[0] === "(" ? "neg" : ""}">${v}</td>`; });
    R += `</tr>`;
  });
  R += `</table>
    <div class="selbox" style="left:22px;top:19px;width:23px;height:22px;border-left:0"><b></b></div>
    ${vscroll(20, 431)}`;

  function sheetTabs(tabs, thumbPad, thumbW) {
    const nav = `<div class="shnav d-flex align-items-center">${ic("n-first",8,8)}${ic("n-prev",8,8)}${ic("n-next",8,8)}${ic("n-last",8,8)}</div>`;
    return `<div class="shtabs d-flex align-items-center flex-none">${nav}
      ${tabs.map((t, i) => `<div class="shtab h-100 d-flex align-items-center ${i === 0 ? "on" : ""}">${t}</div>`).join("")}
      <div class="shtab plus">+</div>
      <div class="dots3"><i></i><i></i><i></i></div>
      <span class="tri-l"></span>
      <div class="hs-thumb ms-1" style="width:${thumbW}px"></div>
      <span class="tri-r" style="margin-left:${thumbPad}px"></span>
      <div style="width:25px"></div></div>
      <div class="split d-flex flex-none">${"<i></i>".repeat(5)}</div>`;
  }

  function address() {
    const parts = ["Computer","C:","Sanwhole Desktop","Examples","DOC"];
    return `<div class="addr d-flex align-items-center flex-none">
      <div class="nav-b">${ic("back",17,13)}</div><div class="nav-b">${ic("fwd",17,13)}</div><div class="nav-b">${ic("up",14,18)}</div>
      <div class="crumb d-flex align-items-center">${ic("ofold",15,12)}<span class="tri-r sm" style="margin-left:10px"></span>
        ${parts.map((p, i) => `<span class="seg">${p}</span>${i < 4 ? '<span class="tri-r sm"></span>' : ""}`).join("")}
        <span class="caret-d ms-auto me-2" style="border-top-color:#555"></span></div>
      <div class="gap"></div>
      <div class="toolb d-flex align-items-center">${ic("hamm",13,15)}<span class="caret-d" style="border-top-color:#555"></span></div>
      <div class="sbox"></div>
      <div class="nav-b" style="width:20px">${ic("srch",14,18)}</div></div>`;
  }

  function ebar(view) {
    return `<div class="ebar d-flex align-items-center">
      <div class="org d-flex align-items-center">Organize<span class="caret-d" style="border-top-color:#1e3a5f;border-width:4px 4px 0"></span></div>
      <div class="open d-flex align-items-center">${ic("openw",12,17)}Open with</div>
      <div>New folder</div>
      <div class="right d-flex align-items-center">${ic(view,15,15)}<span class="caret-d mx-3" style="border-top-color:#1e3a5f;border-width:4px 4px 0"></span>${ic("pane",16,16)}<span style="width:20px"></span>${ic("help",16,18)}</div></div>`;
  }

  const nv = (id, w, h, t, cls, pin) => `<div class="nv d-flex align-items-center ${cls}"><span class="ib">${ic(id,w,h)}</span><span>${t}</span>${pin ? `<span class="pin">${ic("pin",12,14)}</span>` : ""}</div>`;

  function status(text, view) {
    return `<div class="estat d-flex align-items-center">
      <div class="s pe-2">17 items</div><div class="s px-2">${text}</div>
      <div class="v d-flex align-items-center"><div class="vw ${view ? "on" : ""}">${ic("viewd",15,15)}</div><div class="vw" style="width:14px">${ic("stree",14,14)}</div></div></div>`;
  }

  function navScroll(skip, th) {
    return `<div class="vsb d-flex flex-column"><div class="a">⌃</div><div class="flex-none" style="height:${skip}px"></div><div class="th flex-none" style="height:${th}px"></div><div class="flex-grow-1"></div><div class="a">⌄</div></div>`;
  }

  const files = [
    ["blank","Employee<br>Informatio<br>n.xlsx","on"],["docx","Office<br>365.docx"],["blank","ProfitAndL<br>oss.xlsx"],["docx","System<br>Center<br>2012 R2<br>Overvie..."],
    ["blank","tf10000101.<br>xlsx"],["blank","tf16400503.<br>xltx"],["docx","VMC<br>General<br>Template.d<br>ocx"],
    ["docx","VMC<br>Simple<br>Template.d"],["blank","Vole Office<br>Excel 例子.<br>xlsx"],["docx","Vole Office<br>Word<br>Example.d"],["docx","Vole Office<br>Word 例子.<br>docx"],
    ["docx","会议名称<br>议程.docx"],["docx","新闻稿.<br>docx"],["docx","简历.docx"]
  ];
  const leftExpl = `<div class="expl d-flex flex-column">${ebar("viewl")}
    <div class="emain d-flex">
      <div class="enav sl">
        ${nv("qa",15,16,"Quick access","top")}
        ${nv("desk",16,14,"Desktop","sub",1)}${nv("down",16,17,"Downloads","sub",1)}${nv("docs",12,16,"Documents","sub",1)}${nv("pics",15,15,"Pictures","sub",1)}
        ${nv("odrv",16,14,"OneDrive","top gapb")}
        ${nv("mon",16,18,"This PC","top gapb")}
        ${nv("obj3",16,19,"3D Objects","sub")}${nv("desk",16,14,"Desktop","sub")}
      </div>
      ${navScroll(0,105)}
      <div class="efiles">
        <div class="colh d-flex"><span class="sort" style="left:45px"></span>
          <div style="width:83px;padding-left:22px">Name</div><div style="width:103px">Date modified</div><div style="width:80px">Type</div><div style="width:80px">Size</div></div>
        <div class="fgrid">${files.map(f => `<div class="fcell ${f[2] || ""}">${ic(f[0],32,42)}${f[1]}</div>`).join("")}</div>
      </div>
      ${navScroll(0,107)}
    </div>${status("1 item selected&nbsp;&nbsp;23.9 KB",false)}</div>`;

  const rows = [
    ["sblank","Employee Information.xlsx","12/5/2022 11:31 AM","XLSX File"],["sdoc","Office 365.docx","8/15/2014 9:54 AM","Office Open XML"],
    ["sblank","ProfitAndLoss.xlsx","12/5/2022 11:31 AM","XLSX File","on"],["sdoc","System Center 2012 R2 Overview White Paper CN.docx","9/10/2024 2:59 PM","Office Open XML"],
    ["sblank","tf10000101.xlsx","12/13/2023 8:04 PM","XLSX File"],["sblank","tf16400503.xltx","12/13/2023 8:04 PM","XLTX File"],
    ["sdoc","VMC General Template.docx","6/15/2023 1:42 PM","Office Open XML"],["sdoc","VMC Simple Template.docx","7/16/2023 12:06 PM","Office Open XML"],
    ["sblank","Vole Office Excel 例子.xlsx","12/5/2022 11:31 AM","XLSX File"],["sdoc","Vole Office Word Example.docx","4/12/2023 1:40 PM","Office Open XML"]
  ];
  const rightExpl = `<div class="expl d-flex flex-column">${ebar("viewd")}
    <div class="emain d-flex">
      <div class="enav">
        ${nv("pics",15,15,"Pictures","sub",1)}
        ${nv("odrv",16,14,"OneDrive","top gapb")}
        ${nv("mon",16,18,"This PC","top gapb")}
        ${nv("obj3",16,19,"3D Objects","sub")}${nv("desk",16,14,"Desktop","sub")}${nv("docs",12,16,"Documents","sub")}${nv("down",16,17,"Downloads","sub")}${nv("music",12,17,"Music","sub")}${nv("pics",15,15,"Pictures","sub")}${nv("vids",15,15,"Videos","sub")}
      </div>
      ${navScroll(39,105)}
      <div class="efiles">
        <div class="colh d-flex"><span class="sort" style="left:171px"></span>
          <div style="width:360px;padding-left:21px">Name</div><div style="width:144px">Date modified</div><div style="width:100px;border:0">Type</div></div>
        <div class="flist ps-3">${rows.map(r => `<div class="fr d-flex align-items-center ${r[4] || ""}"><div class="n d-flex align-items-center">${ic(r[0],12,16)}<span>${r[1]}</span></div><div class="d">${r[2]}</div><div class="y">${r[3]}</div></div>`).join("")}</div>
        <div class="hsb d-flex align-items-center"><span class="tri-l mx-2" style="border-right-color:#555"></span><div class="th" style="width:474px"></div><span class="tri-r ms-auto me-2" style="border-left-color:#555"></span></div>
      </div>
      ${navScroll(0,107)}
    </div>${status("1 item selected&nbsp;&nbsp;14.9 KB",true)}</div>`;

  document.getElementById("paneL").innerHTML = toolbar(false) + `<div class="sheet sheet-l flex-none">${L}</div>` +
    sheetTabs(["Employee information","Payroll calculator","Individual paystubs"], 33, 301) + address() + leftExpl;
  document.getElementById("paneR").innerHTML = toolbar(true) + `<div class="sheet sheet-r flex-none">${R}</div>` +
    sheetTabs(["Profit and Loss"], 88, 246) + address() + rightExpl;
</script>
<script src="https://cdn.jsdelivr.net/npm/bootstrap@5.3.0/dist/js/bootstrap.bundle.min.js"></script>
</body>
</html>
